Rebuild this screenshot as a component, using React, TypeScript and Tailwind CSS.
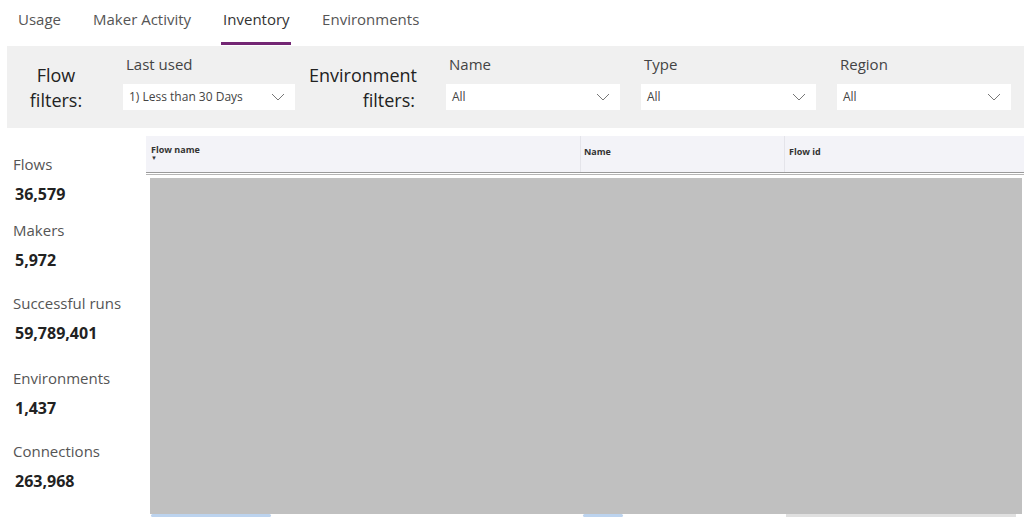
import React from "react";

const font = { fontFamily: '"Segoe UI", "Open Sans", "Noto Sans", sans-serif' };

function Chevron() {
  return (
    <svg width="14" height="8" viewBox="0 0 14 8" className="text-[#777]">
      <path d="M1 1 L7 7 L13 1" fill="none" stroke="currentColor" strokeWidth="1" />
    </svg>
  );
}

function Dropdown({ label, value, width }: { label: string; value: string; width: string }) {
  return (
    <div className={`flex flex-col ${width}`}>
      <div className="h-[28px] pl-[3px] text-[15px] leading-[16px] text-[#444]">{label}</div>
      <div className="flex h-[26px] items-center justify-between bg-white pl-[6px] pr-[10px] text-[12px] text-[#444]">
        <span>{value}</span>
        <Chevron />
      </div>
    </div>
  );
}

const stats = [
  { label: "Flows", value: "36,579", gap: "" },
  { label: "Makers", value: "5,972", gap: "mt-[16px]" },
  { label: "Successful runs", value: "59,789,401", gap: "mt-[23px]" },
  { label: "Environments", value: "1,437", gap: "mt-[25px]" },
  { label: "Connections", value: "263,968", gap: "mt-[23px]" },
];

export default function App() {
  return (
    <div className="h-[517px] w-[1024px] overflow-hidden bg-white" style={font}>
      {/* tabs */}
      <div className="flex h-[46px] items-stretch pl-[18px] text-[15px] text-[#555]">
        <div className="pt-[8px]">Usage</div>
        <div className="ml-[32px] pt-[8px]">Maker Activity</div>
        <div className="ml-[32px] flex flex-col pt-[8px] text-[#333]">
          <span>Inventory</span>
          <div className="mt-auto mb-[1px] h-[3px] w-[70px] -ml-[2px] bg-[#742774]" />
        </div>
        <div className="ml-[31px] pt-[8px]">Environments</div>
      </div>

      {/* filters */}
      <div className="ml-[7px] flex h-[82px] items-start bg-[#f0f0f0]">
        <div className="mt-[17px] w-[98px] text-center text-[18px] leading-[25px] text-[#222]">
          Flow
          <br />
          filters:
        </div>
        <div className="mt-[10px] ml-[18px]">
          <Dropdown label="Last used" value="1) Less than 30 Days" width="w-[172px]" />
        </div>
        <div className="mt-[17px] ml-[14px] w-[106px] text-right text-[18px] leading-[25px] text-[#222]">
          Environment
          <br />
          filters:
        </div>
        <div className="mt-[10px] ml-[31px] flex gap-[21px]">
          <Dropdown label="Name" value="All" width="w-[174px]" />
          <Dropdown label="Type" value="All" width="w-[175px]" />
          <Dropdown label="Region" value="All" width="w-[174px]" />
        </div>
      </div>

      <div className="flex">
        {/* stats */}
        <div className="w-[146px] pl-[13px] pt-[26px]">
          {stats.map((s) => (
            <div key={s.label} className={s.gap}>
              <div className="text-[15px] leading-[20px] text-[#555]">{s.label}</div>
              <div className="mt-[10px] pl-[2px] text-[16px] font-bold leading-[20px] text-[#222]">
                {s.value}
              </div>
            </div>
          ))}
        </div>

        {/* table */}
        <div className="flex-1 pt-[8px]">
          <div className="flex h-[36px] bg-[#f3f3f8] text-[9px] font-bold text-[#333]">
            <div className="w-[434px] pl-[5px] pt-[9px] leading-[10px]">
              Flow name
              <div className="text-[6px] leading-[6px]">▼</div>
            </div>
            <div className="w-[204px] border-l border-[#e4e4ea] pl-[3px] pt-[9px]">Name</div>
            <div className="flex-1 border-l border-[#e4e4ea] pl-[4px] pt-[9px]">Flow id</div>
          </div>
          <div className="h-[1px] bg-[#9a9a9a]" />
          <div className="mt-[1px] h-[1px] bg-[#b5b5b5]" />
          <div className="relative mt-[3px] h-[336px]">
            <div className="ml-[4px] mr-[2px] h-full bg-[#c0c0c0]" />
            <div className="absolute left-[5px] top-[336px] h-[3px] w-[120px] rounded bg-[#bcd3ee]" />
            <div className="absolute left-[437px] top-[336px] h-[3px] w-[40px] rounded bg-[#bcd3ee]" />
            <div className="absolute left-[640px] top-[336px] h-[3px] w-[230px] bg-[#e0e0e0]" />
          </div>
        </div>
      </div>
    </div>
  );
}
